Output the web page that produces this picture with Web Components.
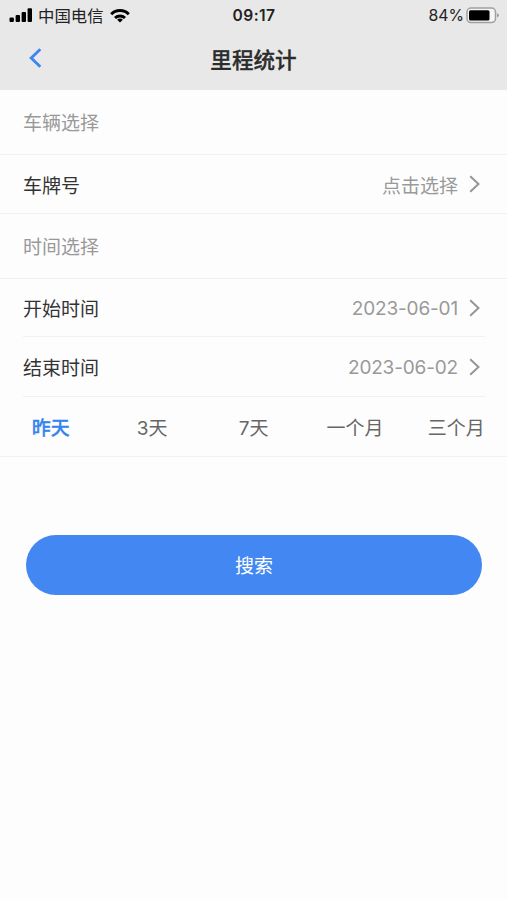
<!DOCTYPE html>
<html lang="zh-CN">
<head>
<meta charset="utf-8">
<meta name="viewport" content="width=device-width, initial-scale=1">
<title>里程统计</title>
<style>
  html, body { margin: 0; height: 100%; background: #fdfdfd; }
  body { font-family: Inter, "Noto Sans CJK SC", sans-serif; color: #333; }
</style>
</head>
<body>
<mileage-page></mileage-page>

<script>
class StatusBar extends HTMLElement {
  constructor() {
    super()
    this.attachShadow({ mode: 'open' })
    this.shadowRoot.innerHTML = `
      <style>
      :host { display: grid; grid-template-columns: 1fr auto 1fr; align-items: center; height: 30px; padding: 0 8px 0 9px; box-sizing: border-box; color: #222; font-size: 16px; line-height: 30px; }
      div { display: flex; align-items: center; }
      svg { display: block; flex: none; }
      .carrier { margin: 0 6px 0 6px; font-size: 16.4px; }
      .time { padding-top: 1px; font-weight: 600; font-size: 15.6px; letter-spacing: .45px; }
      .right { justify-content: flex-end; }
      .level { margin-right: 2px; padding-top: 1px; font-size: 15.8px; }
      </style>
      <div>
        <svg width="23" height="16" viewBox="0 0 23 16" fill="#000">
          <rect x="0.5" y="9.5" width="4.4" height="4.5" rx="1"/>
          <rect x="6.6" y="7" width="4.4" height="7" rx="1"/>
          <rect x="12.6" y="4" width="4.4" height="10" rx="1"/>
          <rect x="18.6" y="0.3" width="4.4" height="13.7" rx="1"/>
        </svg>
        <span class="carrier"></span>
        <svg width="20" height="16" viewBox="0 0 20 16" fill="none" stroke="#000" stroke-width="3">
          <path d="M1.2 6.2C6.1 1.4 13.9 1.4 18.8 6.2"/>
          <path d="M5 10C7.8 7.3 12.2 7.3 15 10"/>
          <path d="M10 14.5L7.1 11.7Q10 9.4 12.9 11.7Z" fill="#000" stroke="none"/>
        </svg>
      </div>
      <span class="time"></span>
      <div class="right">
        <span class="level"></span>
        <svg width="33" height="18" viewBox="0 0 33 18">
          <rect x="1" y="1" width="28.5" height="14.6" rx="4" fill="#f5f5f5" stroke="#a0a0a0" stroke-width="1.5"/>
          <rect x="3" y="3.2" width="20.5" height="10.4" rx="1.5" fill="#000"/>
          <path d="M31 6.2Q32.8 6.9 32.8 8.3T31 10.4Z" fill="#999"/>
        </svg>
      </div>
    `
  }

  connectedCallback() {
    this.shadowRoot.querySelector('.carrier').textContent = this.getAttribute('carrier')
    this.shadowRoot.querySelector('.time').textContent = this.getAttribute('time')
    this.shadowRoot.querySelector('.level').textContent = this.getAttribute('level')
  }
}

class NavBar extends HTMLElement {
  constructor() {
    super()
    this.attachShadow({ mode: 'open' })
    this.shadowRoot.innerHTML = `
      <style>
      :host { display: grid; grid-template-columns: 60px 1fr 60px; align-items: center; height: 60px; box-sizing: border-box; }
      svg { display: block; margin: -4px 0 0 28px; }
      h1 { margin: 0; text-align: center; font-size: 21.6px; font-weight: 500; line-height: 60px; color: #2c2c2c; -webkit-text-stroke: .3px #2c2c2c; }
      </style>
      <svg width="16" height="22" viewBox="0 0 16 22" fill="none" stroke="#3f86f2" stroke-width="2.9"><path d="M12.3 2.2L3.2 11L12.3 19.8"/></svg>
      <h1><slot></slot></h1>
    `
  }
}

class SectionTitle extends HTMLElement {
  constructor() {
    super()
    this.attachShadow({ mode: 'open' })
    this.shadowRoot.innerHTML = `
      <style>
      :host { display: block; height: 65px; padding: 2px 23px 0; box-sizing: border-box; border-bottom: 1px solid #f1f1f1; font-size: 19px; line-height: 64px; color: #999; }
      </style>
      <slot></slot>
    `
  }
}

class CellRow extends HTMLElement {
  constructor() {
    super()
    this.attachShadow({ mode: 'open' })
    this.shadowRoot.innerHTML = `
      <style>
      :host { display: block; height: 59px; font-size: 19px; box-sizing: border-box; border-bottom: 1px solid #f1f1f1; }
      :host([inset]) { margin: 0 22px 0 23px; }
      .cell { display: flex; align-items: center; height: 100%; padding: 0 26px 0 23px; }
      :host([inset]) .cell { padding: 0 4px 0 0; }
      .value { margin-left: auto; padding-top: var(--value-shift, 0); color: #999; letter-spacing: var(--value-spacing, 0); }
      svg { display: block; margin-left: 10px; }
      </style>
      <div class="cell">
        <span class="label"></span>
        <span class="value"><slot></slot></span>
        <svg width="13" height="18" viewBox="0 0 13 18" fill="none" stroke="#969696" stroke-width="2"><path d="M2.2 1.3L10.5 9L2.2 16.7"/></svg>
      </div>
    `
  }

  connectedCallback() {
    this.shadowRoot.querySelector('.label').textContent = this.getAttribute('label')
  }
}

class RangeTabs extends HTMLElement {
  constructor() {
    super()
    this.attachShadow({ mode: 'open' })
    this.shadowRoot.innerHTML = `
      <style>
      :host { display: flex; height: 60px; padding-top: 2px; box-sizing: border-box; border-bottom: 1px solid #f1f1f1; font-size: 19px; line-height: 60px; color: #666; }
      ::slotted(span) { flex: 1; text-align: center; cursor: pointer; }
      ::slotted(.active) { color: #3584ee; font-weight: 500; -webkit-text-stroke: .3px #3584ee; }
      </style>
      <slot></slot>
    `
    this.addEventListener('click', this._onSelect.bind(this))
  }

  _onSelect(event) {
    if (event.target === this) { return }
    this.querySelectorAll('span').forEach(function (item) {
      item.classList.toggle('active', item === event.target)
    })
  }
}

class SubmitButton extends HTMLElement {
  constructor() {
    super()
    this.attachShadow({ mode: 'open' })
    this.shadowRoot.innerHTML = `
      <style>
      :host { display: block; margin: 78px 25px 0 26px; }
      button { display: block; width: 100%; height: 60px; padding: 3px 0 0; border: 0; border-radius: 30px; background: #4287f2; color: #fff; font: inherit; font-size: 19px; line-height: 57px; cursor: pointer; }
      </style>
      <button><slot></slot></button>
    `
  }
}

class MileagePage extends HTMLElement {
  constructor() {
    super()
    this.attachShadow({ mode: 'open' })
    this.shadowRoot.innerHTML = `
      <style>
      :host { display: block; }
      header { background: #e8e8e8; }
      .start, .end { --value-spacing: -.17px; --value-shift: 2px; }
      .start { height: 58px; }
      .end { height: 60px; }
      </style>
      <header>
        <status-bar carrier="中国电信" time="09:17" level="84%"></status-bar>
        <nav-bar>里程统计</nav-bar>
      </header>
      <section-title>车辆选择</section-title>
      <cell-row label="车牌号">点击选择</cell-row>
      <section-title>时间选择</section-title>
      <cell-row class="start" label="开始时间" inset>2023-06-01</cell-row>
      <cell-row class="end" label="结束时间" inset>2023-06-02</cell-row>
      <range-tabs>
        <span class="active">昨天</span>
        <span>3天</span>
        <span>7天</span>
        <span>一个月</span>
        <span>三个月</span>
      </range-tabs>
      <submit-button>搜索</submit-button>
    `
  }
}

customElements.define('status-bar', StatusBar)
customElements.define('nav-bar', NavBar)
customElements.define('section-title', SectionTitle)
customElements.define('cell-row', CellRow)
customElements.define('range-tabs', RangeTabs)
customElements.define('submit-button', SubmitButton)
customElements.define('mileage-page', MileagePage)
</script>
</body>
</html>
